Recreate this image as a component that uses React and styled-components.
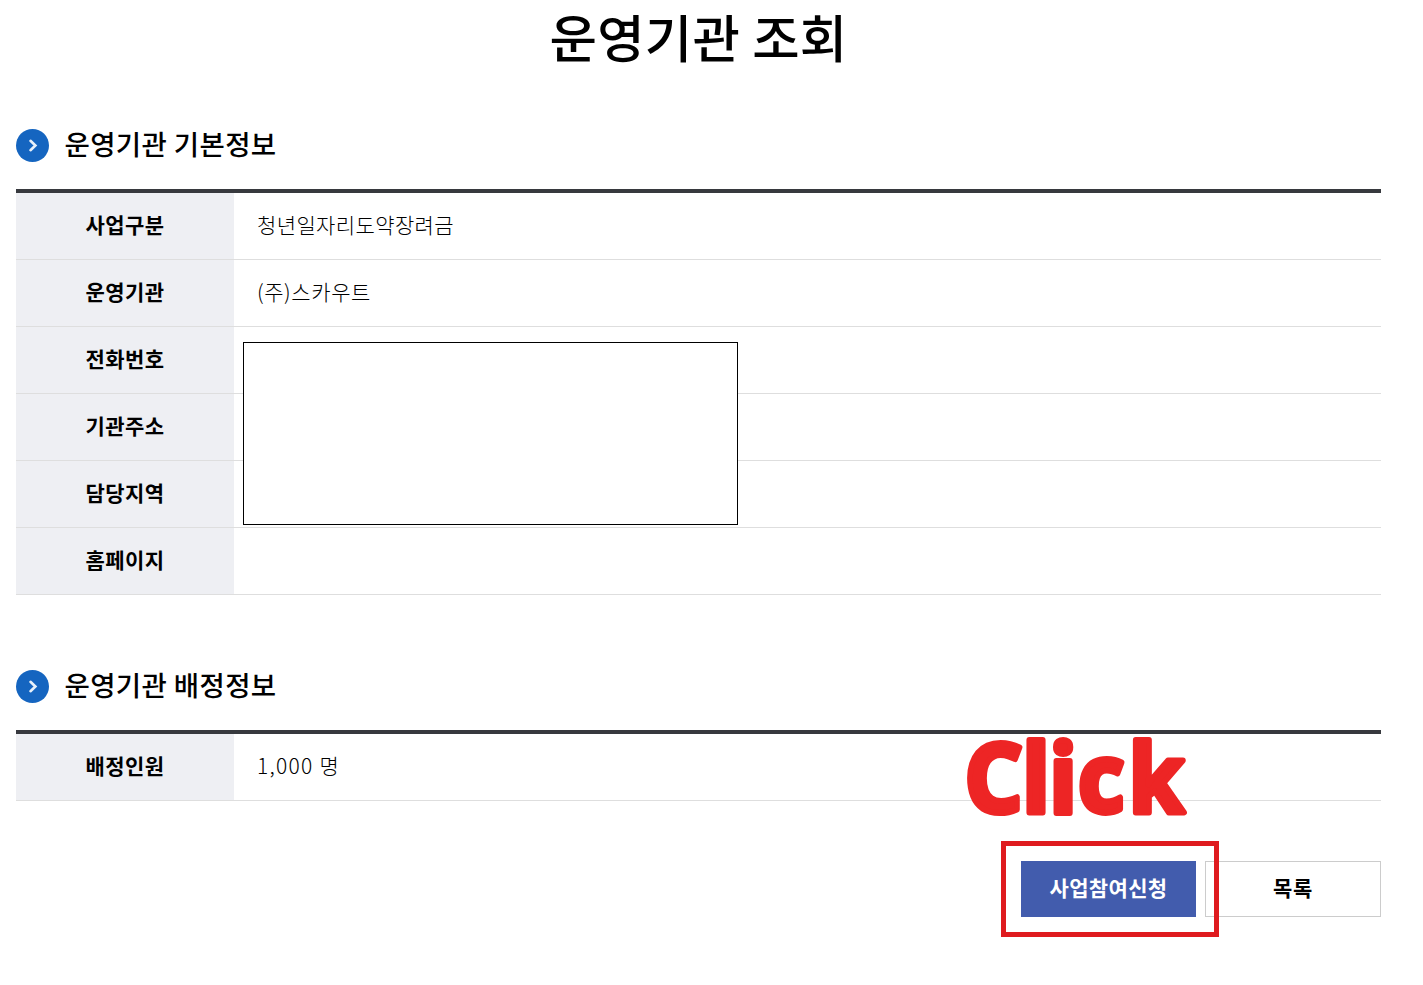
import React from "react";
import styled, { createGlobalStyle } from "styled-components";

const basicInfo = [
  { label: "사업구분", value: "청년일자리도약장려금", width: 197 },
  { label: "운영기관", value: "(주)스카우트", width: 114 },
  { label: "전화번호" },
  { label: "기관주소" },
  { label: "담당지역" },
  { label: "홈페이지" },
];

const quotaInfo = [{ label: "배정인원", value: "1,000 명", width: 83 }];

// keeps each label at a fixed advance, whatever CJK font is installed
function Fit({ width, children }) {
  const ref = React.useRef(null);
  React.useLayoutEffect(() => {
    const el = ref.current;
    if (!width || !el) return;
    el.style.letterSpacing = "0px";
    const gap = (width - el.getBoundingClientRect().width) / el.textContent.length;
    el.style.letterSpacing = `${gap}px`;
  }, [width, children]);
  return <Text ref={ref}>{children}</Text>;
}

function Section({ title, rows, children }) {
  return (
    <Block>
      <Heading>
        <Bullet viewBox="0 0 33 33">
          <circle cx="16.5" cy="16.5" r="16.5" fill="#1565c0" />
          <path d="M14.5 11.8l4.9 4.7-4.9 4.7" fill="none" stroke="#e8f1fa" strokeWidth="2.6" strokeLinecap="round" />
        </Bullet>
        <Fit width={212}>{title}</Fit>
      </Heading>
      <Table>
        {rows.map((row) => (
          <Row key={row.label}>
            <Label><Fit width={79}>{row.label}</Fit></Label>
            <Value>{row.value && <Fit width={row.width}>{row.value}</Fit>}</Value>
          </Row>
        ))}
        {children}
      </Table>
    </Block>
  );
}

function App() {
  return (
    <Container>
      <GlobalStyle />
      <Title><Fit width={298}>운영기관 조회</Fit></Title>
      <Section title="운영기관 기본정보" rows={basicInfo}>
        <Cover />
      </Section>
      <Section title="운영기관 배정정보" rows={quotaInfo} />
      <Buttons>
        <Button $primary><Fit width={118}>사업참여신청</Fit></Button>
        <Button><Fit width={40}>목록</Fit></Button>
        <ClickBox />
        <ClickText viewBox="0 0 240 100">
          <text transform="scale(0.94 1)" x="5.3 66.7 95.4 125.5 179.5" y="82">Click</text>
        </ClickText>
      </Buttons>
    </Container>
  );
}

const GlobalStyle = createGlobalStyle`
  body {
    margin: 0;
    background: #fff;
    color: #000;
    font-family: "Noto Sans CJK KR", "Noto Sans", sans-serif;
    overflow: hidden;
  }
  * {
    box-sizing: border-box;
  }
`

const Container = styled.main`
  width: 1365px;
  height: 985px;
  margin-left: 16px;
`

const Text = styled.span`
  display: inline-block;
  white-space: nowrap;
`

const Title = styled.h1`
  height: 78px;
  margin: 0 0 34px;
  font-size: 51.5px;
  font-weight: 500;
  line-height: 71px;
  text-align: center;
`

const Block = styled.section`
  margin-bottom: 60px;
  & + & {
    margin-top: -2px;
  }
`

const Heading = styled.h2`
  display: flex;
  align-items: center;
  gap: 15.5px;
  height: 66px;
  margin: 0 0 11px;
  font-size: 27.5px;
  font-weight: 500;
  line-height: 62px;
  & span {
    height: 66px;
  }
`

const Bullet = styled.svg`
  width: 33px;
  height: 33px;
`

const Table = styled.div`
  position: relative;
  border-top: 4px solid #37393e;
`

const Row = styled.div`
  display: flex;
  height: 67px;
  border-bottom: 1px solid #dedede;
  font-size: 21px;
  line-height: 63px;
`

const Label = styled.div`
  width: 218px;
  background: #eeeff3;
  font-weight: 700;
  text-align: center;
`

const Value = styled.div`
  flex: 1;
  padding-left: 23px;
  font-weight: 300;
`

const Cover = styled.div`
  position: absolute;
  top: 149px;
  left: 227px;
  width: 495px;
  height: 183px;
  border: 1px solid #000;
  background: #fff;
`

const Buttons = styled.div`
  position: relative;
  display: flex;
  justify-content: flex-end;
  gap: 9px;
`

const Button = styled.button`
  width: ${(props) => (props.$primary ? "175px" : "176px")};
  height: 56px;
  padding: 0 0 4px;
  border: 1px solid ${(props) => (props.$primary ? "#425cad" : "#ccc")};
  background: ${(props) => (props.$primary ? "#425cad" : "#fff")};
  color: ${(props) => (props.$primary ? "#fff" : "#000")};
  font-family: inherit;
  font-size: 21px;
  font-weight: 700;
`

const ClickBox = styled.div`
  position: absolute;
  top: -20px;
  left: 985px;
  width: 218px;
  height: 96px;
  border: 5px solid #df1b1f;
`

const ClickText = styled.svg`
  position: absolute;
  top: -131px;
  left: 944px;
  width: 240px;
  height: 100px;
  overflow: visible;
  fill: #ed2525;
  stroke: #ed2525;
  stroke-width: 6px;
  stroke-linejoin: round;
  font-family: "Noto Sans", sans-serif;
  font-size: 95px;
  font-weight: 700;
`

export default App;
